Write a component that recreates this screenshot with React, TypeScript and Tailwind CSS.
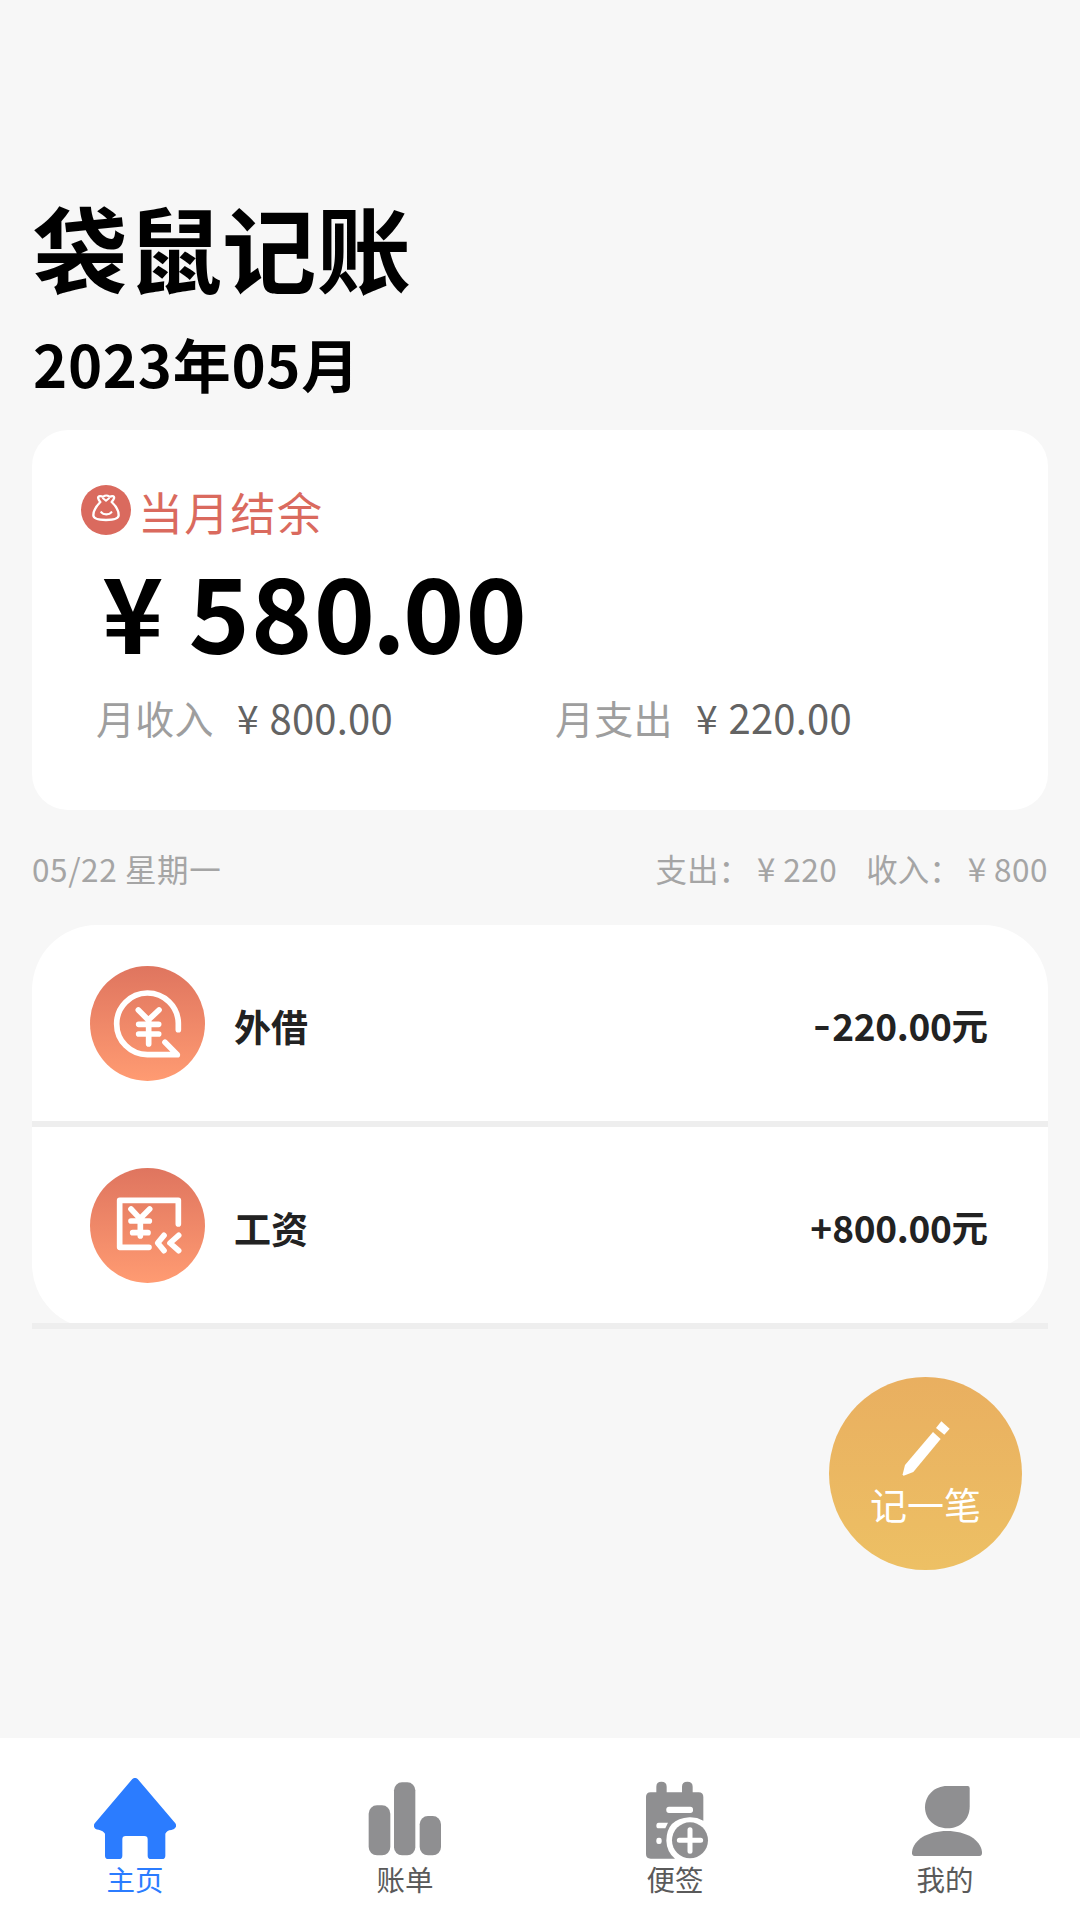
import React from 'react';

type Tab = { label: string; icon: React.ReactNode; active?: boolean };
type Entry = { name: string; sign: string; amount: string; icon: React.ReactNode };

const MoneyBagIcon: React.FC = () => (
    <svg className="w-[50px] h-[50px]" viewBox="0 0 150 150" fill="none" stroke="#fff" strokeWidth="7" strokeLinejoin="round" strokeLinecap="round">
        <circle cx="75" cy="75" r="75" fill="#da6a5e" stroke="none" />
        <path d="M58 51 C52 44 49 36 54 34 C60 31 64 37 68 34 C72 31 80 31 84 34 C88 37 92 31 97 34 C102 37 98 44 92 51 C102 60 113 76 113 91 C113 101 99 105 75 105 C51 105 37 101 37 91 C37 76 49 60 58 51 Z" />
        <path d="M66 40 L75 47 L84 40" strokeWidth="6" />
        <path d="M61 82 C67 90 85 90 91 82" />
    </svg>
);

const LoanIcon: React.FC = () => (
    <svg className="w-[115px] h-[115px]" viewBox="0 0 345 345" fill="none" stroke="#fff" strokeWidth="17" strokeLinecap="round" strokeLinejoin="round">
        <path d="M265 191 V172 A92.5 92.5 0 1 0 172 266 H262 L225 229" />
        <path d="M145 132 L175 162 L207 132 M146 175 H206 M146 204 H206 M176 163 V234" />
    </svg>
);

const SalaryIcon: React.FC = () => (
    <svg className="w-[115px] h-[115px]" viewBox="0 0 345 345" fill="none" stroke="#fff" strokeWidth="17" strokeLinecap="round" strokeLinejoin="round">
        <path d="M265 168 V97 H89 V238 H177" />
        <path d="M123 123 L150 152 L179 123 M123 159 H178 M128 194 H174 M151 153 V204" />
        <path d="M222 202 L203 225 L222 248 M266 202 L240 225 L266 248" />
    </svg>
);

const PencilIcon: React.FC = () => (
    <svg className="w-[50px] h-[58px]" viewBox="301 210 150 174" fill="#fff">
        <path d="M397 246 L420 267 L338 366 L309 377 Q306 377 306 373 L313 345 Z" />
        <path d="M422 214 L447 236 L431 254 L406 234 Z" />
    </svg>
);

const HomeIcon: React.FC = () => (
    <svg className="w-[82px] h-[82px]" viewBox="102 144 246 246" fill="#2b7cff">
        <path d="M217 147 Q225 140 233 147 L346 280 Q350 286 347 292 Q344 299 334 300 Q321 301 316 311 V377 Q316 387 306 387 H273 Q263 387 263 377 V328 Q263 318 253 318 H197 Q187 318 187 328 V377 Q187 387 177 387 H145 Q135 387 135 377 V311 Q130 302 116 299 Q105 299 102 290 Q100 285 105 279 Z" />
    </svg>
);

const BillIcon: React.FC = () => (
    <svg className="w-[82px] h-[82px]" viewBox="912 144 246 246" fill="#8f8f91">
        <rect x="926" y="226" width="65" height="150" rx="25" />
        <rect x="1002" y="157" width="64" height="219" rx="24" />
        <rect x="1079" y="258" width="64" height="118" rx="25" />
    </svg>
);

const NoteIcon: React.FC = () => (
    <svg className="w-[82px] h-[82px]" viewBox="102 144 246 246" fill="#8f8f91">
        <path d="M169 187 V170 Q169 155 184 155 Q200 155 200 170 V187 H246 V170 Q246 155 262 155 Q278 155 278 170 V187 H296 Q310 187 310 201 V272 Q290 261 268 262 Q200 266 199 332 Q200 365 225 386 H152 Q138 386 138 372 V201 Q138 187 152 187 Z" />
        <rect x="199" y="230" width="80" height="19" rx="8" fill="#fff" />
        <path d="M176 278 H204 L196 295 H176 Q169 295 169 287 Q169 278 176 278 Z" fill="#fff" />
        <rect x="169" y="323" width="16" height="19" rx="7" fill="#fff" />
        <circle cx="270" cy="331" r="54" />
        <path d="M270 299 V364 M238 331 H302" stroke="#fff" strokeWidth="15" strokeLinecap="round" />
    </svg>
);

const MineIcon: React.FC = () => (
    <svg className="w-[82px] h-[82px]" viewBox="912 144 246 246" fill="#8f8f91">
        <path d="M1041 168 H1103 Q1109 168 1109 174 V230 C1109 268 1080 295 1042 295 C1004 295 975 268 975 232 C975 196 1004 168 1041 168 Z" />
        <path d="M936 366 C940 329 984 303 1041 303 C1098 303 1142 329 1146 366 Q1147 378 1138 378 H944 Q935 378 936 366 Z" />
    </svg>
);

const entries: Entry[] = [
    { name: '外借', sign: '-', amount: '220.00', icon: <LoanIcon /> },
    { name: '工资', sign: '+', amount: '800.00', icon: <SalaryIcon /> },
];

const tabs: Tab[] = [
    { label: '主页', icon: <HomeIcon />, active: true },
    { label: '账单', icon: <BillIcon /> },
    { label: '便签', icon: <NoteIcon /> },
    { label: '我的', icon: <MineIcon /> },
];

const MonthTotal: React.FC<{ label: string; value: string }> = ({ label, value }) => (
    <div className="flex w-[459px] text-[39px] leading-[48px]">
        <span className="tracking-[0.3px] text-[#9e9e9e]">{label}</span>
        <span className="ml-[23px] text-[#636363]">¥</span>
        <span className="ml-[11px] text-[40px] tracking-[0.2px] text-[#636363]">{value}</span>
    </div>
);

const DaySum: React.FC<{ label: string; value: string }> = ({ label, value }) => (
    <div className="flex">
        <span>{label}：</span>
        <span className="ml-[7px] text-[33px]">¥</span>
        <span className="ml-[8px] tracking-[0.5px]">{value}</span>
    </div>
);

const EntryRow: React.FC<{ entry: Entry }> = ({ entry }) => (
    <li className="flex h-[202px] items-center border-b-[6px] border-[#eeeeee] pl-[58px] pr-[60px] text-[37px] leading-[50px] font-bold text-[#222222]">
        <div className="rounded-full bg-linear-to-b from-[#df755f] to-[#ff9b72]">{entry.icon}</div>
        <span className="ml-[29px] pt-[5px]">{entry.name}</span>
        <div className="ml-auto flex pt-[4px]">
            <span className={entry.sign === '-' ? 'mr-[1px] origin-right -translate-y-[2px] scale-x-130' : ''}>{entry.sign}</span>
            <span className="tracking-[-0.3px]">{entry.amount}</span>
            <span className="text-[36.5px]">元</span>
        </div>
    </li>
);

export default function App() {
    return (
        <div className="relative flex h-[1920px] w-[1080px] flex-col overflow-hidden bg-[#f7f7f7] font-['Noto_Sans_CJK_SC',sans-serif]">
            <main className="flex-1 px-8 pt-[198px]">
                <h1 className="pl-[1px] text-[94.5px] leading-[96px] font-bold text-black">袋鼠记账</h1>
                <p className="mt-[39px] pl-[1px] text-[58px] leading-[60px] font-bold tracking-[0.7px] text-black">2023年05月</p>

                <section className="mt-[37px] h-[380px] rounded-[36px] bg-white pt-[55px]">
                    <div className="flex items-center pl-[49px]">
                        <MoneyBagIcon />
                        <span className="ml-[7px] pt-[3px] text-[45px] leading-[47px] tracking-[1.3px] text-[#da6a5e]">当月结余</span>
                    </div>
                    <div className="mt-[21px] flex pl-[70px] text-[104px] leading-[105px] font-bold text-black">
                        <span>¥</span>
                        <span className="ml-[25px] tracking-[1.3px]">
                            58<span className="tracking-[-3px]">0.</span>00
                        </span>
                    </div>
                    <div className="mt-[32px] flex pl-[64px]">
                        <MonthTotal label="月收入" value="800.00" />
                        <MonthTotal label="月支出" value="220.00" />
                    </div>
                </section>

                <div className="mt-[38px] flex justify-between text-[31.5px] leading-[40px] text-[#a5a5a5]">
                    <span className="tracking-[0.6px]">05/22 星期一</span>
                    <div className="flex gap-[29px]">
                        <DaySum label="支出" value="220" />
                        <DaySum label="收入" value="800" />
                    </div>
                </div>

                <ul className="mt-[37px] rounded-[65px] bg-white">
                    {entries.map(entry => (
                        <EntryRow key={entry.name} entry={entry} />
                    ))}
                </ul>
            </main>

            <button className="absolute left-[829px] top-[1377px] flex h-[193px] w-[193px] flex-col items-center rounded-full bg-linear-to-b from-[#e9af60] to-[#edc064] pt-[43px] text-white">
                <PencilIcon />
                <span className="mt-[4px] text-[37px] leading-[44px]">记一笔</span>
            </button>

            <nav className="grid h-[182px] grid-cols-4 bg-white pt-[40px]">
                {tabs.map(tab => (
                    <div key={tab.label} className={`flex flex-col items-center text-[28.5px] leading-[36px] ${tab.active ? 'text-[#2b7cff]' : 'text-[#5a5a5a]'}`}>
                        {tab.icon}
                        <span className="mt-[1px]">{tab.label}</span>
                    </div>
                ))}
            </nav>
        </div>
    );
}
